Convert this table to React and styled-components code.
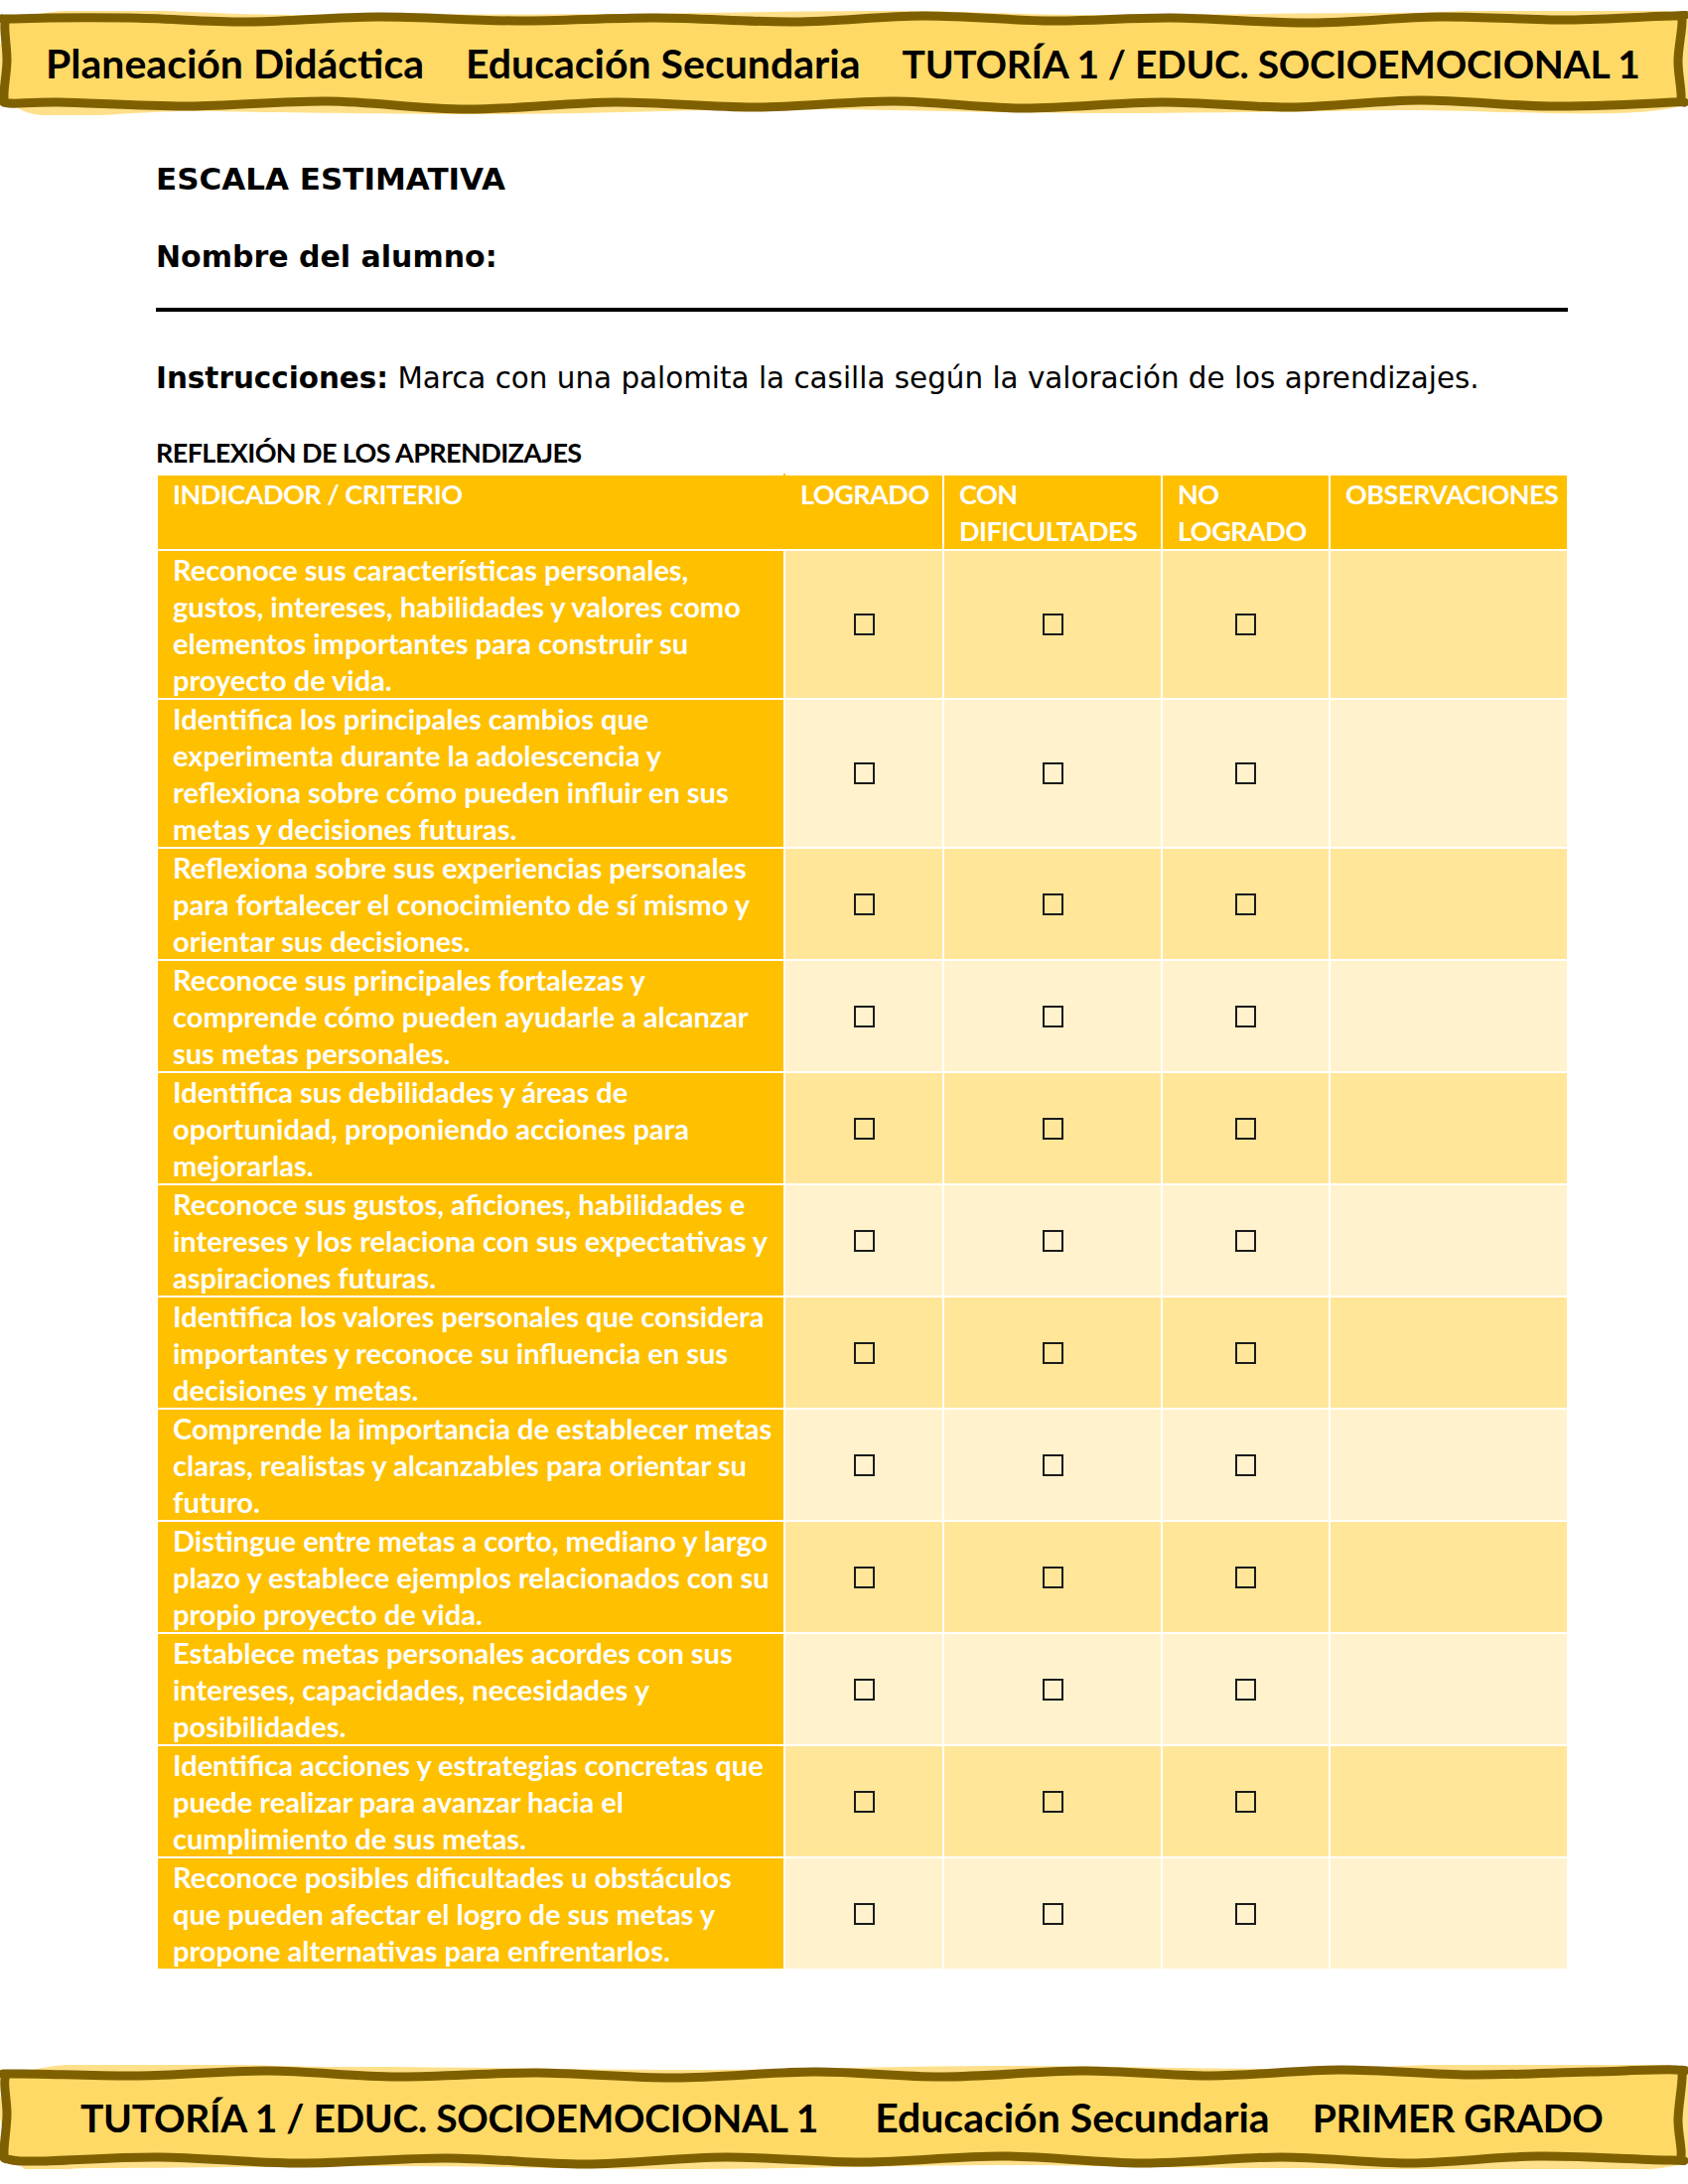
import styled, { createGlobalStyle } from "styled-components";

const GlobalStyle = createGlobalStyle`
  html, body {
    margin: 0;
    padding: 0;
    background: #fff;
  }
  body {
    font-family: "DejaVu Sans", sans-serif;
  }
`;

const Page = styled.div`
  width: 1700px;
  min-height: 2200px;
  display: flex;
  flex-direction: column;
  background: #fff;
`;

const Banner = styled.header`
  position: relative;
  height: 105px;
  margin: ${(p) => (p.$footer ? "auto 0 15px" : "11px 0 0")};
  display: flex;
  align-items: center;
  padding-left: ${(p) => p.$left}px;
`;

const BannerShape = styled.svg`
  position: absolute;
  left: 0;
  top: 0;
  z-index: 0;
`;

const BannerText = styled.span`
  position: relative;
  z-index: 1;
  margin-left: ${(p) => p.$ml || 0}px;
  font-family: Lato, "Open Sans", sans-serif;
  font-weight: 700;
  font-size: ${(p) => (p.$caps ? "39px" : "41px")};
  letter-spacing: ${(p) => (p.$caps ? "-0.3px" : "0")};
  color: #000;
  white-space: nowrap;
`;

const Content = styled.main`
  display: flex;
  flex-direction: column;
  padding: 0 121px 0 157px;
`;

const Title = styled.h1`
  margin: ${(p) => p.$mt}px 0 0;
  font-family: "DejaVu Sans", sans-serif;
  font-weight: 700;
  font-size: ${(p) => p.$size}px;
  line-height: 36px;
  color: #000;
`;

const NameRule = styled.div`
  margin-top: 33px;
  border-top: 4px solid #000;
`;

const Instructions = styled.p`
  margin: 49px 0 0;
  font-family: "DejaVu Sans", sans-serif;
  font-size: 29.4px;
  line-height: 36px;
  color: #000;
  white-space: nowrap;

  strong {
    font-weight: 700;
  }
`;

const Caption = styled.h2`
  margin: 38px 0 3px;
  font-family: Lato, "Open Sans", sans-serif;
  font-weight: 700;
  font-size: 27px;
  line-height: 37px;
  letter-spacing: -0.6px;
  color: #000;
`;

const Table = styled.table`
  width: 1421px;
  border-collapse: collapse;
  table-layout: fixed;
  font-family: Lato, "Open Sans", sans-serif;
  font-weight: 700;
  font-size: 29px;
  line-height: 37px;
  color: #fff;
`;

const Col = styled.col`
  width: ${(p) => p.$w}px;
`;

const HeadCell = styled.th`
  background: #ffc000;
  border: 2px solid #fff;
  border-right: ${(p) => (p.$joined ? "2px solid #ffc000" : "2px solid #fff")};
  padding: 0 15px;
  text-align: left;
  vertical-align: top;
  font-size: 27px;
  font-weight: 700;
  letter-spacing: -0.5px;
  white-space: nowrap;
`;

const CriterionCell = styled.td`
  background: #ffc000;
  border: 2px solid #fff;
  padding: 0 15px;
  vertical-align: top;
  white-space: nowrap;
`;

const ScaleCell = styled.td`
  background: ${(p) => (p.$odd ? "#ffe699" : "#fff2cc")};
  border: 2px solid #fff;
  padding: 0;
  vertical-align: middle;
`;

const Box = styled.span`
  display: block;
  width: 21px;
  height: 22px;
  margin: 0 auto;
  box-sizing: border-box;
  border: 2px solid #1c1c1c;
`;

const smooth = (pts) => {
  const n = pts.length;
  let d = `M${pts[0][0]},${pts[0][1]}`;
  for (let i = 0; i < n; i++) {
    const p0 = pts[(i - 1 + n) % n];
    const p1 = pts[i];
    const p2 = pts[(i + 1) % n];
    const p3 = pts[(i + 2) % n];
    const c1 = [p1[0] + (p2[0] - p0[0]) / 6, p1[1] + (p2[1] - p0[1]) / 6];
    const c2 = [p2[0] - (p3[0] - p1[0]) / 6, p2[1] - (p3[1] - p1[1]) / 6];
    d += ` C${c1[0].toFixed(1)},${c1[1].toFixed(1)} ${c2[0].toFixed(1)},${c2[1].toFixed(1)} ${p2[0]},${p2[1]}`;
  }
  return d + " Z";
};

const headerOutline = [
  [5, 12], [14, 8], [130, 7], [250, 11], [380, 6], [520, 10], [660, 7],
  [800, 11], [930, 5], [1060, 10], [1180, 7], [1320, 12], [1450, 6],
  [1580, 9], [1686, 5], [1694, 9], [1690, 50], [1693, 88], [1684, 92],
  [1560, 96], [1430, 90], [1300, 97], [1170, 92], [1030, 98], [900, 91],
  [760, 97], [620, 92], [470, 99], [330, 91], [190, 96], [60, 92],
  [10, 93], [4, 86], [7, 50],
];

const headerGlow = [
  [30, 6], [300, 4], [620, 3], [900, 0], [1100, 4], [1400, 2], [1690, 3],
  [1694, 95], [1400, 100], [1100, 103], [800, 99], [500, 104], [200, 101],
  [20, 99],
];

const footerOutline = [
  [5, 14], [16, 9], [140, 11], [270, 6], [400, 12], [540, 8], [680, 13],
  [820, 7], [950, 12], [1090, 6], [1220, 11], [1350, 5], [1480, 10],
  [1600, 7], [1688, 5], [1694, 12], [1690, 55], [1693, 92], [1682, 96],
  [1550, 92], [1420, 99], [1290, 93], [1150, 99], [1010, 92], [870, 98],
  [730, 93], [590, 100], [450, 94], [300, 99], [160, 93], [40, 97],
  [8, 95], [4, 88], [7, 50],
];

const footerGlow = [
  [30, 6], [350, 2], [700, 5], [1000, 1], [1300, 4], [1690, 2],
  [1694, 100], [1300, 104], [1000, 101], [700, 105], [400, 102], [100, 104],
  [20, 100],
];

const BannerDrawing = ({ outline, glow }) => (
  <BannerShape width="1700" height="105" viewBox="0 0 1700 105">
    <path d={smooth(glow)} fill="#ffe08a" />
    <path
      d={smooth(outline)}
      fill="#ffd966"
      stroke="#7f6000"
      strokeWidth="9"
      strokeLinejoin="round"
    />
  </BannerShape>
);

const criteria = [
  ["Reconoce sus características personales,", "gustos, intereses, habilidades y valores como", "elementos importantes para construir su", "proyecto de vida."],
  ["Identifica los principales cambios que", "experimenta durante la adolescencia y", "reflexiona sobre cómo pueden influir en sus", "metas y decisiones futuras."],
  ["Reflexiona sobre sus experiencias personales", "para fortalecer el conocimiento de sí mismo y", "orientar sus decisiones."],
  ["Reconoce sus principales fortalezas y", "comprende cómo pueden ayudarle a alcanzar", "sus metas personales."],
  ["Identifica sus debilidades y áreas de", "oportunidad, proponiendo acciones para", "mejorarlas."],
  ["Reconoce sus gustos, aficiones, habilidades e", "intereses y los relaciona con sus expectativas y", "aspiraciones futuras."],
  ["Identifica los valores personales que considera", "importantes y reconoce su influencia en sus", "decisiones y metas."],
  ["Comprende la importancia de establecer metas", "claras, realistas y alcanzables para orientar su", "futuro."],
  ["Distingue entre metas a corto, mediano y largo", "plazo y establece ejemplos relacionados con su", "propio proyecto de vida."],
  ["Establece metas personales acordes con sus", "intereses, capacidades, necesidades y", "posibilidades."],
  ["Identifica acciones y estrategias concretas que", "puede realizar para avanzar hacia el", "cumplimiento de sus metas."],
  ["Reconoce posibles dificultades u obstáculos", "que pueden afectar el logro de sus metas y", "propone alternativas para enfrentarlos."],
];

const Lines = ({ lines }) =>
  lines.map((line, i) => (
    <span key={i}>
      {line}
      {i < lines.length - 1 && <br />}
    </span>
  ));

export default function App() {
  return (
    <Page>
      <GlobalStyle />
      <Banner $left={46}>
        <BannerDrawing outline={headerOutline} glow={headerGlow} />
        <BannerText>Planeación Didáctica</BannerText>
        <BannerText $ml={42}>Educación Secundaria</BannerText>
        <BannerText $ml={42} $caps>
          TUTORÍA 1 / EDUC. SOCIOEMOCIONAL 1
        </BannerText>
      </Banner>

      <Content>
        <Title $mt={46} $size={31}>
          ESCALA ESTIMATIVA
        </Title>
        <Title $mt={43} $size={30}>
          Nombre del alumno:
        </Title>
        <NameRule />
        <Instructions>
          <strong>Instrucciones:</strong> Marca con una palomita la casilla según la valoración de los aprendizajes.
        </Instructions>
        <Caption>REFLEXIÓN DE LOS APRENDIZAJES</Caption>
        <Table>
          <colgroup>
            <Col $w={632} />
            <Col $w={160} />
            <Col $w={220} />
            <Col $w={169} />
            <Col $w={240} />
          </colgroup>
          <thead>
            <tr>
              <HeadCell $joined>
                INDICADOR / CRITERIO
                <br />
                &nbsp;
              </HeadCell>
              <HeadCell>LOGRADO</HeadCell>
              <HeadCell>
                CON
                <br />
                DIFICULTADES
              </HeadCell>
              <HeadCell>
                NO
                <br />
                LOGRADO
              </HeadCell>
              <HeadCell>OBSERVACIONES</HeadCell>
            </tr>
          </thead>
          <tbody>
            {criteria.map((lines, i) => (
              <tr key={i}>
                <CriterionCell>
                  <Lines lines={lines} />
                </CriterionCell>
                <ScaleCell $odd={i % 2 === 0}>
                  <Box />
                </ScaleCell>
                <ScaleCell $odd={i % 2 === 0}>
                  <Box />
                </ScaleCell>
                <ScaleCell $odd={i % 2 === 0}>
                  <Box />
                </ScaleCell>
                <ScaleCell $odd={i % 2 === 0} />
              </tr>
            ))}
          </tbody>
        </Table>
      </Content>

      <Banner $footer $left={81}>
        <BannerDrawing outline={footerOutline} glow={footerGlow} />
        <BannerText $caps>TUTORÍA 1 / EDUC. SOCIOEMOCIONAL 1</BannerText>
        <BannerText $ml={57}>Educación Secundaria</BannerText>
        <BannerText $ml={43} $caps>
          PRIMER GRADO
        </BannerText>
      </Banner>
    </Page>
  );
}
